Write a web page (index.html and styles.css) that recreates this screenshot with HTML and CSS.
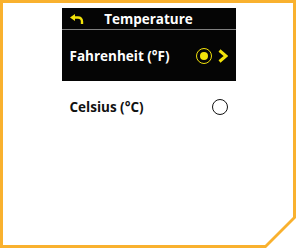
FILE: index.html
```html
<!DOCTYPE html>
<html lang="en">

<head>
    <meta charset="UTF-8">
    <title>Temperature</title>
    <link rel="stylesheet" href="styles.css">
</head>

<body>
    <div class="frame">
        <div class="screen">
            <div class="menu">
                <div class="menu-header">
                    <svg class="back-icon" width="14" height="10" viewBox="0 0 14 10">
                        <path d="M0 3.5 L5 0 L5 7 Z" fill="#f2e20a" />
                        <path d="M4 3.5 H8 Q12 3.5 12 7.5 V10" fill="none" stroke="#f2e20a" stroke-width="2.4" />
                    </svg>
                    <span class="menu-title">Temperature</span>
                    <span></span>
                </div>

                <div class="menu-item selected">
                    <span class="item-label">Fahrenheit (°F)</span>
                    <div class="item-controls">
                        <span class="radio checked"></span>
                        <svg class="chevron" width="10" height="14" viewBox="0 0 10 14">
                            <polyline points="1.5,1.5 8,7 1.5,12.5" fill="none" stroke="#f2e20a" stroke-width="3" />
                        </svg>
                    </div>
                </div>

                <div class="menu-item">
                    <span class="item-label">Celsius (°C)</span>
                    <div class="item-controls">
                        <span class="radio"></span>
                    </div>
                </div>
            </div>
        </div>
    </div>
</body>

</html>
```

FILE: styles.css
```css
* {
    margin: 0;
    padding: 0;
    box-sizing: border-box;
}

body {
    font-family: 'Open Sans', 'DejaVu Sans', sans-serif;
    background: white;
    width: 298px;
    height: 248px;
}

.frame {
    width: 296px;
    height: 248px;
    padding: 3px;
    background: #f9b12e;
    clip-path: polygon(0 0, 100% 0, 100% calc(100% - 30px), calc(100% - 30px) 100%, 0 100%);
}

.screen {
    width: 100%;
    height: 100%;
    background: white;
    padding-top: 5px;
    clip-path: polygon(0 0, 100% 0, 100% calc(100% - 28px), calc(100% - 28px) 100%, 0 100%);
}

.menu {
    width: 175px;
    margin: 0 auto;
    padding-left: 1px;
}

.menu-header {
    height: 22px;
    background: #050505;
    border-bottom: 1px solid #808080;
    display: grid;
    grid-template-columns: 20px 1fr 20px;
    align-items: center;
    padding: 0 8px;
}

.back-icon {
    display: block;
    margin-top: 1px;
}

.menu-title {
    color: white;
    font-weight: 700;
    font-size: 13.5px;
    text-align: center;
}

.menu-item {
    height: 51px;
    display: flex;
    align-items: center;
    justify-content: space-between;
    padding: 0 8px;
    color: #111;
}

.menu-item.selected {
    background: #050505;
    color: white;
}

.item-label {
    font-weight: 700;
    font-size: 13.5px;
}

.item-controls {
    display: flex;
    align-items: center;
    gap: 6px;
}

.radio {
    width: 16px;
    height: 16px;
    border-radius: 50%;
    border: 1.3px solid #111;
    display: flex;
    align-items: center;
    justify-content: center;
}

.radio.checked {
    border: 1.5px solid #f2e20a;
}

.radio.checked::after {
    content: '';
    width: 8px;
    height: 8px;
    border-radius: 50%;
    background: #f2e20a;
}

.chevron {
    display: block;
}
```
